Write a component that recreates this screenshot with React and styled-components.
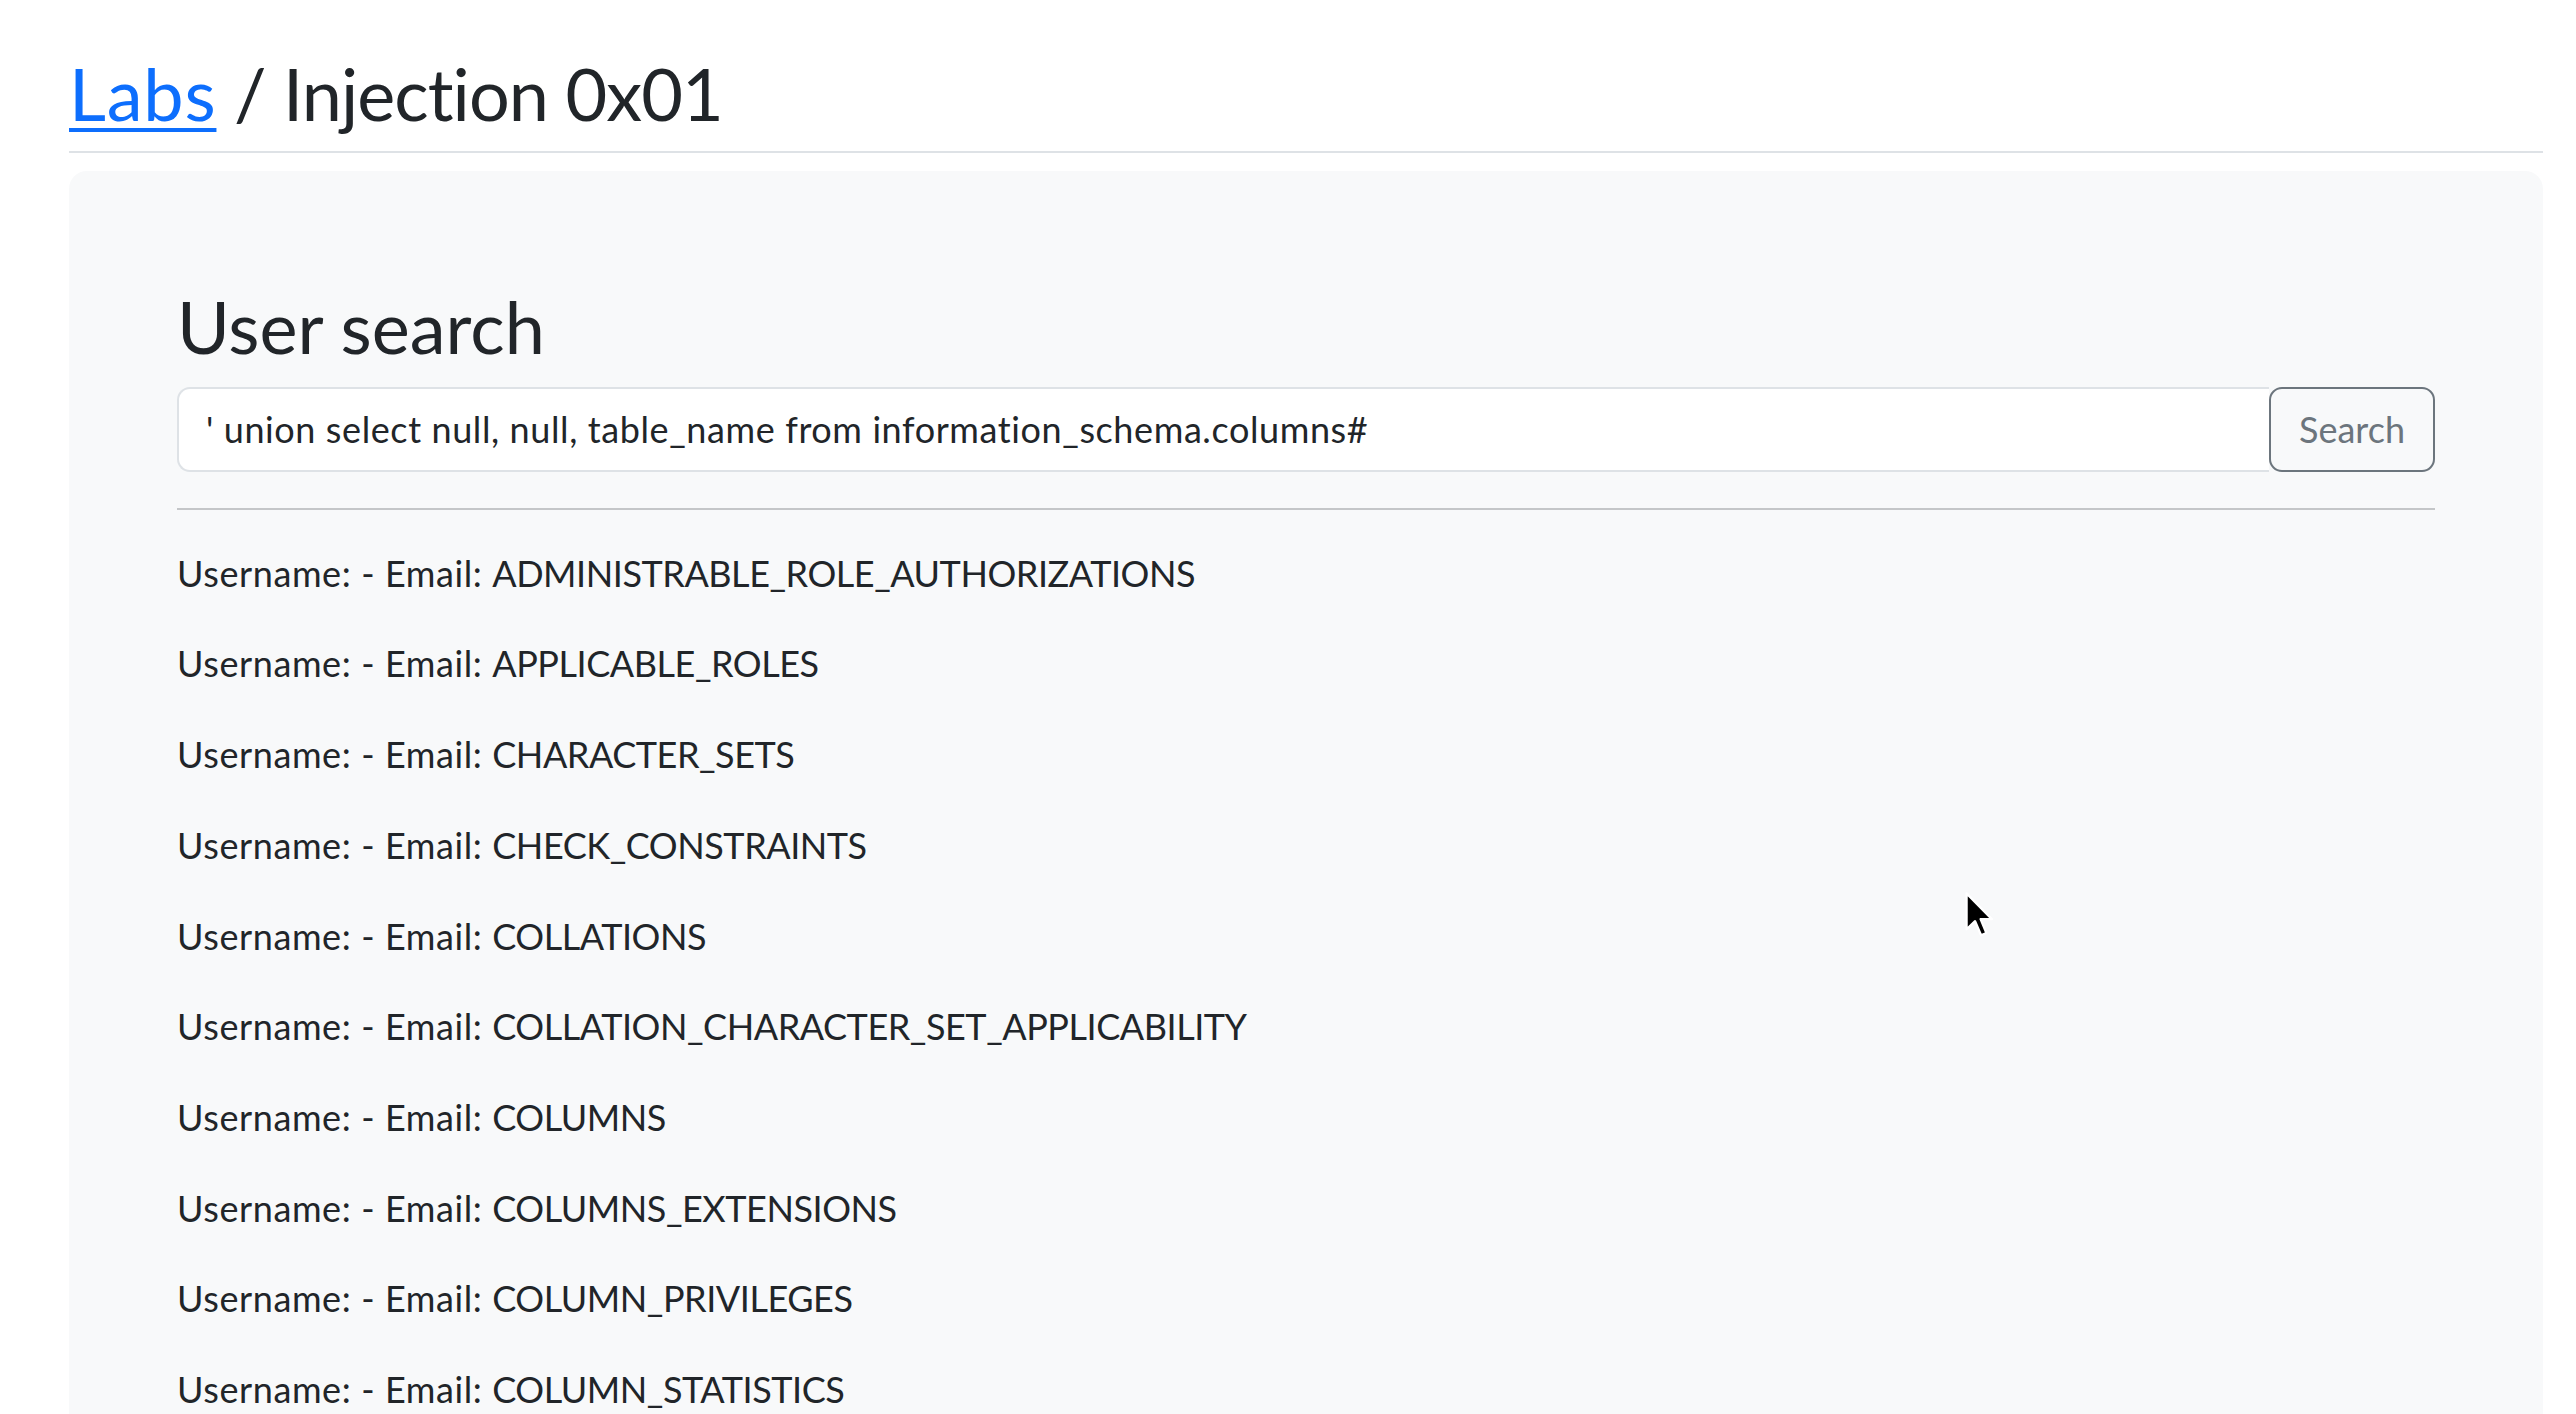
import React from "react";
import styled, { createGlobalStyle } from "styled-components";

const GlobalStyle = createGlobalStyle`
  html, body { margin: 0; padding: 0; background: #ffffff; }
  body {
    font-family: "Lato", "Open Sans", sans-serif;
    color: #212529;
    font-size: 36px;
    line-height: 1.5;
    -webkit-font-smoothing: antialiased;
  }
  * { box-sizing: border-box; }
`;

const Page = styled.main`
  padding: 50px 33px 0 69px;
  position: relative;
  height: 1414px;
  overflow: hidden;
`;

const Header = styled.header`
  padding-bottom: 15px;
  border-bottom: 2px solid #dee2e6;
`;

const Title = styled.h2`
  margin: 0;
  font-size: 72px;
  font-weight: 400;
  line-height: 1.2;
  letter-spacing: -0.95px;
  color: #212529;
`;

const Crumb = styled.a`
  color: #0d6efd;
  text-decoration: underline;
  text-decoration-thickness: 4px;
  text-underline-offset: 7px;
  letter-spacing: 0.8px;
`;

const Panel = styled.section`
  margin-top: 18px;
  background: #f8f9fa;
  border-radius: 18px;
  padding: 112px 108px 108px;
`;

const PanelTitle = styled.h2`
  margin: 0 0 17px;
  font-size: 72px;
  font-weight: 400;
  line-height: 1.2;
  color: #212529;
`;

const SearchBar = styled.form`
  display: flex;
  align-items: stretch;
  height: 85px;
`;

const SearchInput = styled.input`
  flex: 1;
  min-width: 0;
  font-family: "Lato", sans-serif;
  font-size: 36px;
  letter-spacing: 0.6px;
  color: #212529;
  background: #ffffff;
  border: 2px solid #dee2e6;
  border-right: none;
  border-radius: 13px 0 0 13px;
  padding: 0 27px;
  outline: none;
`;

const SearchButton = styled.button`
  flex: none;
  width: 166px;
  font-family: "Lato", sans-serif;
  font-size: 36px;
  color: #6c757d;
  background: transparent;
  border: 2px solid #6c757d;
  border-radius: 13px;
  padding: 0 27px;
  cursor: pointer;
`;

const Divider = styled.hr`
  margin: 36px 0;
  border: 0;
  border-top: 2px solid #c4c6c8;
`;

const ResultList = styled.div`
  display: flex;
  flex-direction: column;
`;

const Result = styled.p`
  margin: 0 0 36.2px;
  line-height: 54.5px;
  white-space: nowrap;
`;

const FieldLabel = styled.span`
  letter-spacing: 0.6px;
`;

const FieldValue = styled.span`
  letter-spacing: -0.45px;
`;

const Cursor = styled.svg`
  position: absolute;
  left: 1965px;
  top: 892px;
  width: 28px;
  height: 46px;
  pointer-events: none;
`;

const tables = [
  "ADMINISTRABLE_ROLE_AUTHORIZATIONS",
  "APPLICABLE_ROLES",
  "CHARACTER_SETS",
  "CHECK_CONSTRAINTS",
  "COLLATIONS",
  "COLLATION_CHARACTER_SET_APPLICABILITY",
  "COLUMNS",
  "COLUMNS_EXTENSIONS",
  "COLUMN_PRIVILEGES",
  "COLUMN_STATISTICS",
];

export default function App() {
  return (
    <>
      <GlobalStyle />
      <Page>
        <Header>
          <Title>
            <Crumb href="#">Labs</Crumb> / Injection 0x01
          </Title>
        </Header>
        <Panel>
          <PanelTitle>User search</PanelTitle>
          <SearchBar onSubmit={(e) => e.preventDefault()}>
            <SearchInput
              type="text"
              defaultValue="' union select null, null, table_name from information_schema.columns#"
            />
            <SearchButton type="submit">Search</SearchButton>
          </SearchBar>
          <Divider />
          <ResultList>
            {tables.map((t) => (
              <Result key={t}>
                <FieldLabel>Username: - Email: </FieldLabel>
                <FieldValue>{t}</FieldValue>
              </Result>
            ))}
          </ResultList>
        </Panel>
        <Cursor viewBox="0 0 12 20">
          <path
            d="M0.6 0.6 L0.6 16.2 L4.3 12.7 L6.9 18.8 L9.2 17.8 L6.7 11.8 L11.6 11.8 Z"
            fill="#000"
            stroke="#fff"
            strokeWidth="1"
            strokeLinejoin="round"
          />
        </Cursor>
      </Page>
    </>
  );
}
